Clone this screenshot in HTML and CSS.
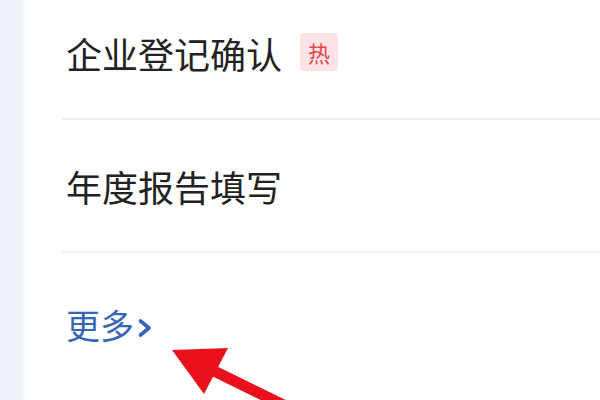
FILE: index.html
```html
<!DOCTYPE html>
<html lang="zh-CN">
<head>
<meta charset="utf-8">
<link rel="stylesheet" href="styles.css">
</head>
<body>
<div class="page">
  <div class="rail"></div>
  <div class="panel">
    <div class="list">
      <div class="row">
        <span class="label">企业登记确认</span>
        <span class="badge">热</span>
      </div>
      <div class="row">
        <span class="label">年度报告填写</span>
      </div>
      <a class="more">
        <span class="more-text">更多</span>
        <svg class="chev" width="16" height="20" viewBox="0 0 16 20"><path d="M3.5 3 L12 10 L3.5 17" fill="none" stroke="#3466b4" stroke-width="3.6" stroke-linecap="round" stroke-linejoin="round"/></svg>
      </a>
    </div>
  </div>
  <svg class="arrow" width="600" height="400" viewBox="0 0 600 400">
    <line x1="210" y1="369" x2="310" y2="418" stroke="#e8111c" stroke-width="11"/>
    <polygon points="172,350 228,348 204,394" fill="#e8111c"/>
  </svg>
</div>
</body>
</html>
```

FILE: styles.css
```css
html, body {
  margin: 0;
  padding: 0;
  background: #ffffff;
}

.page {
  position: relative;
  width: 600px;
  height: 400px;
  overflow: hidden;
  display: flex;
  font-family: "Noto Sans CJK SC", "Noto Sans", sans-serif;
}

.rail {
  width: 30px;
  flex: none;
  background: linear-gradient(to right, #edf1f7 0px, #eef2f7 20px, #fbfbfa 26px, #ffffff 30px);
}

.panel {
  flex: 1;
  padding-left: 32px;
  background: #ffffff;
}

.list {
  margin-top: -13px;
  display: flex;
  flex-direction: column;
}

.row {
  height: 131px;
  border-bottom: 2px solid #f1f1f1;
  display: flex;
  align-items: center;
  padding-left: 4px;
}

.label {
  font-size: 36px;
  line-height: 42px;
  color: #222222;
  letter-spacing: 0;
}

.badge {
  margin-left: 18px;
  width: 38px;
  height: 38px;
  border-radius: 4px;
  background: #fde3e5;
  color: #e2434c;
  font-size: 22px;
  line-height: 38px;
  text-align: center;
  margin-top: -2px;
}

.more {
  display: flex;
  align-items: center;
  padding-top: 52px;
  padding-left: 4px;
  color: #3466b4;
  text-decoration: none;
}

.more-text {
  font-size: 34px;
  line-height: 40px;
}

.chev {
  margin-left: 3px;
  margin-top: 6px;
}

.arrow {
  position: absolute;
  left: 0;
  top: 0;
  pointer-events: none;
}
```
